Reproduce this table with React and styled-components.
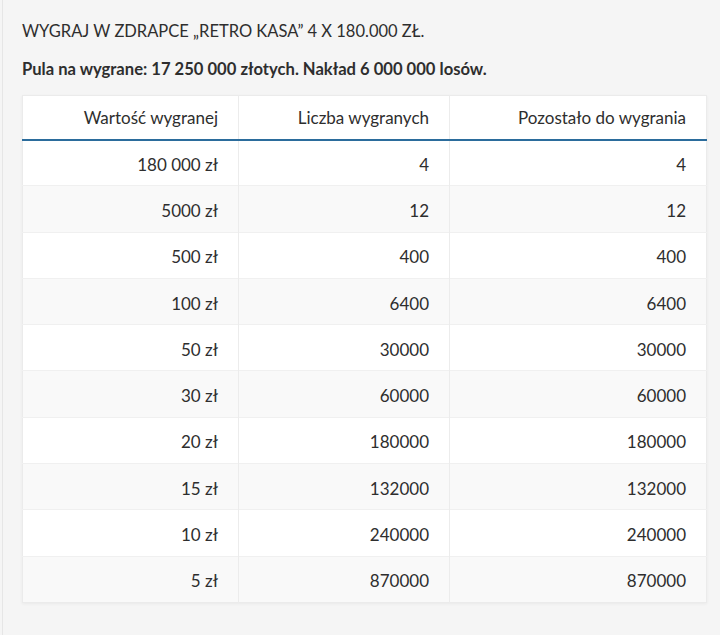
import React from "react";
import styled, { createGlobalStyle } from "styled-components";

const GlobalStyle = createGlobalStyle`
  html, body {
    margin: 0;
    padding: 0;
    background: #f5f5f5;
  }
  body {
    font-family: Lato, "Open Sans", "Liberation Sans", sans-serif;
    color: #333;
  }
`;

const Page = styled.div`
  margin-left: 2px;
  min-height: 635px;
  box-sizing: border-box;
  border-left: 1px solid #e6e6e6;
  padding: 19px 13px 0 19px;
`;

const Title = styled.h3`
  margin: 0 0 14px;
  font-size: 16.5px;
  line-height: 24px;
  font-weight: 400;
  color: #2e2e2e;
`;

const Subtitle = styled.p`
  margin: 0 0 14px;
  font-size: 16.6px;
  line-height: 24px;
  font-weight: 700;
  color: #2e2e2e;
`;

const Table = styled.table`
  width: 685px;
  table-layout: fixed;
  border-collapse: collapse;
  background: #fff;
  border: 1px solid #ebebeb;
  box-shadow: 0 1px 3px rgba(0, 0, 0, 0.05);
  font-size: 17px;
`;

const HeadCell = styled.th`
  height: 44px;
  padding: 0 20px 0 10px;
  text-align: right;
  font-weight: 400;
  color: #2e2e2e;
  border-left: 1px solid #ececec;
  border-bottom: 2px solid #2b6c9c;
  box-sizing: border-box;
  &:first-child {
    border-left: none;
  }
`;

const Row = styled.tr`
  background: ${(p) => (p.$alt ? "#f9f9f9" : "#fff")};
`;

const Cell = styled.td`
  height: 46.3px;
  padding: 3px 20px 0 10px;
  text-align: right;
  color: #2e2e2e;
  border-left: 1px solid #ececec;
  border-top: 1px solid #f0f0f0;
  box-sizing: border-box;
  &:first-child {
    border-left: none;
  }
`;

const rows = [
  ["180 000 zł", "4", "4"],
  ["5000 zł", "12", "12"],
  ["500 zł", "400", "400"],
  ["100 zł", "6400", "6400"],
  ["50 zł", "30000", "30000"],
  ["30 zł", "60000", "60000"],
  ["20 zł", "180000", "180000"],
  ["15 zł", "132000", "132000"],
  ["10 zł", "240000", "240000"],
  ["5 zł", "870000", "870000"],
];

export default function App() {
  return (
    <>
      <GlobalStyle />
      <Page>
        <Title>WYGRAJ W ZDRAPCE „RETRO KASA” 4 X 180.000 ZŁ.</Title>
        <Subtitle>Pula na wygrane: 17 250 000 złotych. Nakład 6 000 000 losów.</Subtitle>
        <Table>
          <colgroup>
            <col style={{ width: "216px" }} />
            <col style={{ width: "211px" }} />
            <col />
          </colgroup>
          <thead>
            <tr>
              <HeadCell>Wartość wygranej</HeadCell>
              <HeadCell>Liczba wygranych</HeadCell>
              <HeadCell>Pozostało do wygrania</HeadCell>
            </tr>
          </thead>
          <tbody>
            {rows.map((r, i) => (
              <Row key={i} $alt={i % 2 === 1}>
                {r.map((v, j) => (
                  <Cell key={j}>{v}</Cell>
                ))}
              </Row>
            ))}
          </tbody>
        </Table>
      </Page>
    </>
  );
}
